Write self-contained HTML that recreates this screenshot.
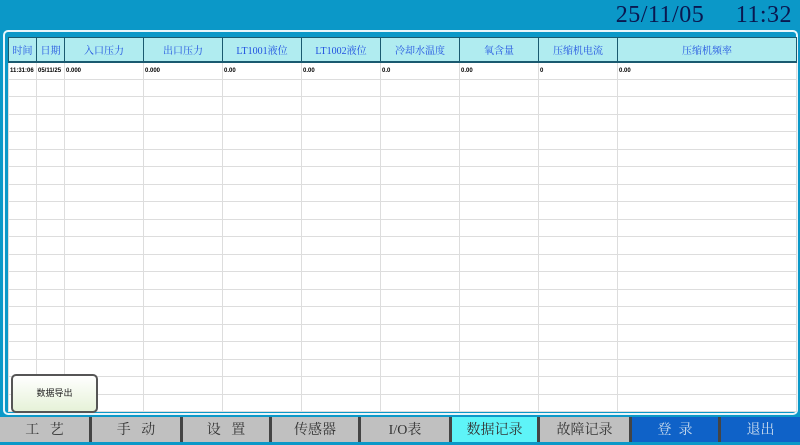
<!DOCTYPE html><html><head><meta charset="utf-8"><style>
*{margin:0;padding:0;box-sizing:border-box}
body{width:800px;height:442px;background:#0b98c8;position:relative;overflow:hidden;font-family:"Liberation Serif","Noto Serif CJK SC",serif}
.clock{position:absolute;right:8px;top:2px;font-size:24px;color:#0a1850;letter-spacing:0.5px;word-spacing:4px}
.panel{position:absolute;left:3px;top:30px;width:795px;height:385px;border:2px solid #e8f6fb;border-radius:5px;background:#0b98c8}
table{position:absolute;left:8px;top:37px;border-collapse:collapse;table-layout:fixed;background:#fff}
th{background:#b0ecf0;color:#2050e0;font-weight:normal;font-size:10px;height:24px;border:1px solid #1a5a70;border-bottom:2px solid #1a5a70;font-family:"Liberation Serif","Noto Serif CJK SC",serif}
td{height:17.5px;border:1px solid #ddd;font-size:6px;font-weight:bold;font-family:"Liberation Sans",sans-serif;padding-left:1px;white-space:nowrap;overflow:hidden}
.exp{position:absolute;left:11px;top:374px;width:87px;height:39px;border:2px solid #555;border-radius:5px;background:linear-gradient(#fff,#e6f2d8);font-size:9px;text-align:center;line-height:35px;color:#222;font-family:"Liberation Sans","Noto Sans CJK SC",sans-serif}
.b{position:absolute;top:417px;height:25px;background:#c0c0c0;color:#333;font-size:14px;text-align:center;line-height:28px;border-left:3px solid #444}
</style></head><body>
<div class="clock">25/11/05&nbsp;&nbsp;&nbsp;11:32</div>
<div class="panel"></div>
<table>
<colgroup><col style="width:28px"><col style="width:28px"><col style="width:79px"><col style="width:79px"><col style="width:79px"><col style="width:79px"><col style="width:79px"><col style="width:79px"><col style="width:79px"><col style="width:179px"></colgroup>
<tr><th>时间</th><th>日期</th><th>入口压力</th><th>出口压力</th><th>LT1001液位</th><th>LT1002液位</th><th>冷却水温度</th><th>氧含量</th><th>压缩机电流</th><th>压缩机频率</th></tr>
<tr><td>11:31:06</td><td>05/11/25</td><td>0.000</td><td>0.000</td><td>0.00</td><td>0.00</td><td>0.0</td><td>0.00</td><td>0</td><td>0.00</td></tr>
<tr><td></td><td></td><td></td><td></td><td></td><td></td><td></td><td></td><td></td><td></td></tr>
<tr><td></td><td></td><td></td><td></td><td></td><td></td><td></td><td></td><td></td><td></td></tr>
<tr><td></td><td></td><td></td><td></td><td></td><td></td><td></td><td></td><td></td><td></td></tr>
<tr><td></td><td></td><td></td><td></td><td></td><td></td><td></td><td></td><td></td><td></td></tr>
<tr><td></td><td></td><td></td><td></td><td></td><td></td><td></td><td></td><td></td><td></td></tr>
<tr><td></td><td></td><td></td><td></td><td></td><td></td><td></td><td></td><td></td><td></td></tr>
<tr><td></td><td></td><td></td><td></td><td></td><td></td><td></td><td></td><td></td><td></td></tr>
<tr><td></td><td></td><td></td><td></td><td></td><td></td><td></td><td></td><td></td><td></td></tr>
<tr><td></td><td></td><td></td><td></td><td></td><td></td><td></td><td></td><td></td><td></td></tr>
<tr><td></td><td></td><td></td><td></td><td></td><td></td><td></td><td></td><td></td><td></td></tr>
<tr><td></td><td></td><td></td><td></td><td></td><td></td><td></td><td></td><td></td><td></td></tr>
<tr><td></td><td></td><td></td><td></td><td></td><td></td><td></td><td></td><td></td><td></td></tr>
<tr><td></td><td></td><td></td><td></td><td></td><td></td><td></td><td></td><td></td><td></td></tr>
<tr><td></td><td></td><td></td><td></td><td></td><td></td><td></td><td></td><td></td><td></td></tr>
<tr><td></td><td></td><td></td><td></td><td></td><td></td><td></td><td></td><td></td><td></td></tr>
<tr><td></td><td></td><td></td><td></td><td></td><td></td><td></td><td></td><td></td><td></td></tr>
<tr><td></td><td></td><td></td><td></td><td></td><td></td><td></td><td></td><td></td><td></td></tr>
<tr><td></td><td></td><td></td><td></td><td></td><td></td><td></td><td></td><td></td><td></td></tr>
<tr><td></td><td></td><td></td><td></td><td></td><td></td><td></td><td></td><td></td><td></td></tr>
</table>
<div class="exp">数据导出</div>
<div class="b" style="left:0;width:89px;border-left:none">工&nbsp;&nbsp;&nbsp;艺</div>
<div class="b" style="left:89px;width:91px">手&nbsp;&nbsp;&nbsp;动</div>
<div class="b" style="left:180px;width:89px">设&nbsp;&nbsp;&nbsp;置</div>
<div class="b" style="left:269px;width:89px">传感器</div>
<div class="b" style="left:358px;width:91px">I/O表</div>
<div class="b" style="left:449px;width:88px;background:#5ef4f8">数据记录</div>
<div class="b" style="left:537px;width:92px">故障记录</div>
<div class="b" style="left:629px;width:89px;background:#0f62c8;color:#cde">登&nbsp;&nbsp;录</div>
<div class="b" style="left:718px;width:82px;background:#0f62c8;color:#cde">退出</div>
</body></html>
